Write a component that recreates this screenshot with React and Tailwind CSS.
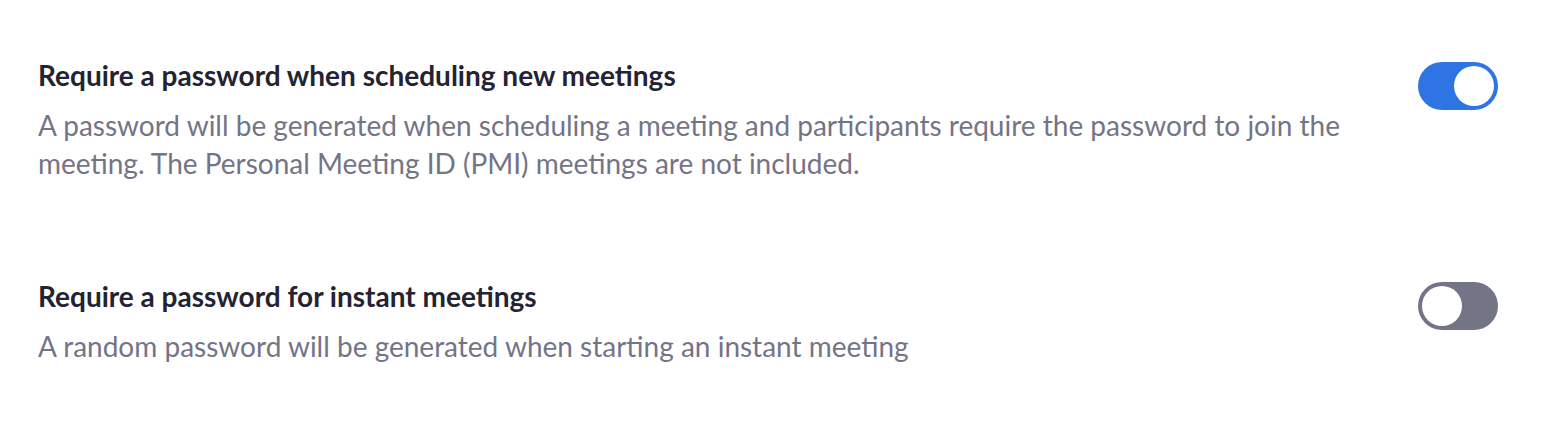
import React from "react";

function Toggle({ on, className = "" }) {
  return (
    <div
      className={
        "relative h-[48px] w-[80px] shrink-0 rounded-full " +
        (on ? "bg-[#2e74e3] " : "bg-[#747487] ") +
        className
      }
    >
      <div
        className={
          "absolute top-[4px] h-[40px] w-[40px] rounded-full bg-white " +
          (on ? "right-[4px]" : "left-[4px]")
        }
      />
    </div>
  );
}

function Row({ title, desc, on, className = "", toggleClass = "" }) {
  return (
    <div className={"flex items-start justify-between " + className}>
      <div className="max-w-[1340px] flex-1">
        <div className="text-[28px] font-bold leading-[38px] text-[#232333]">{title}</div>
        <div className="mt-[12px] text-[28px] leading-[38px] text-[#747487]">{desc}</div>
      </div>
      <Toggle on={on} className={toggleClass} />
    </div>
  );
}

export default function App() {
  return (
    <div
      className="min-h-[428px] w-full bg-white pl-[38px] pr-[56px] pt-[56px]"
      style={{ fontFamily: "Lato, 'Noto Sans', sans-serif" }}
    >
      <Row
        title="Require a password when scheduling new meetings"
        desc="A password will be generated when scheduling a meeting and participants require the password to join the meeting. The Personal Meeting ID (PMI) meetings are not included."
        on={true}
        toggleClass="mt-[6px]"
      />
      <Row
        className="mt-[95px]"
        title="Require a password for instant meetings"
        desc="A random password will be generated when starting an instant meeting"
        on={false}
        toggleClass="mt-[5px]"
      />
    </div>
  );
}
